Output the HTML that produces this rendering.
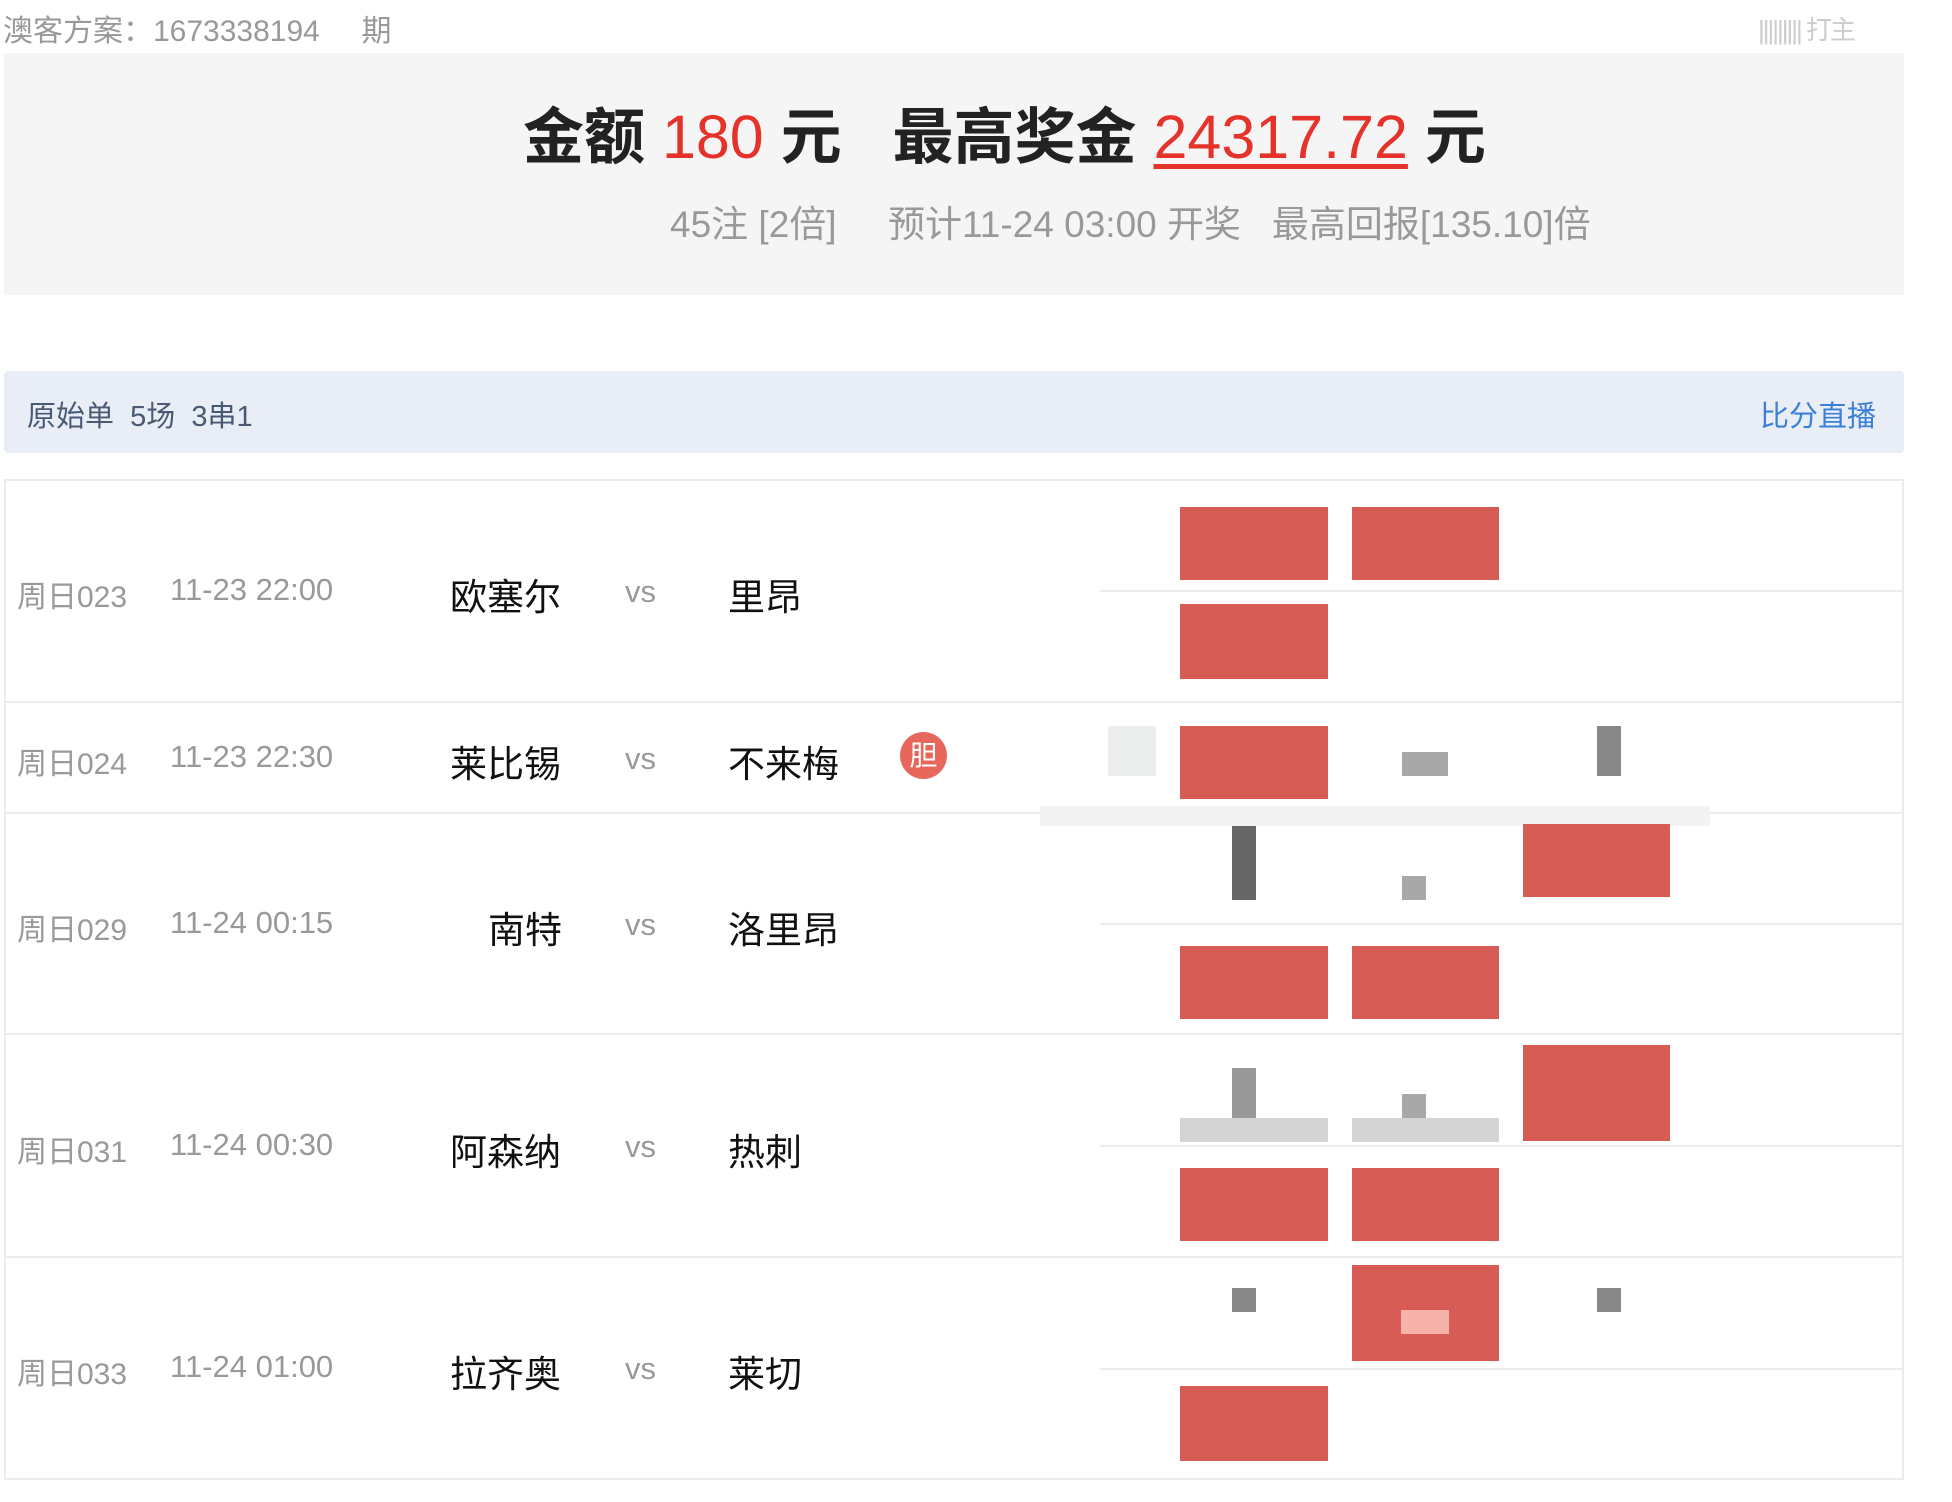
<!DOCTYPE html>
<html><head><meta charset="utf-8"><style>
*{margin:0;padding:0;box-sizing:border-box}
body{width:1952px;height:1502px;background:#fff;position:relative;overflow:hidden;font-family:"Liberation Sans","Noto Sans CJK SC",sans-serif}
.a{position:absolute;white-space:nowrap}
.r{position:absolute;background:#d65c55}
.g{position:absolute;background:#a8a8a8}
.l{position:absolute;height:2px;background:#ececec}
.t1{color:#999;font-size:30px}
.t2{color:#999;font-size:31px}
.tm{color:#111;font-size:37px}
.vs{color:#999;font-size:31px}
</style></head><body>
<div class="a" style="left:3px;top:6px;font-size:30px;color:#999">澳客方案：1673338194&nbsp;&nbsp;&nbsp;&nbsp;&nbsp;期</div>
<div class="a" style="left:1758px;top:10px;font-size:26px;color:#ccc;letter-spacing:-2px">||||||||| 打主</div>
<div class="a" style="left:4px;top:53px;width:1900px;height:242px;background:#f5f5f5"></div>
<div class="a" style="left:523px;top:100px;font-size:61px;font-weight:bold;color:#222;line-height:74px">金额 <span style="color:#e5322a;font-weight:normal">180</span> 元&nbsp;&nbsp;&nbsp;最高奖金 <span style="color:#e5322a;font-weight:normal;text-decoration:underline;text-decoration-thickness:5px;text-underline-offset:6px">24317.72</span> 元</div>
<div class="a" style="left:670px;top:194px;font-size:37px;color:#999">45注 [2倍]&nbsp;&nbsp;&nbsp;&nbsp;&nbsp;预计11-24 03:00 开奖&nbsp;&nbsp;&nbsp;最高回报[135.10]倍</div>
<div class="a" style="left:4px;top:371px;width:1900px;height:82px;background:#e9eef6;border-radius:4px"></div>
<div class="a" style="left:27px;top:393px;font-size:29px;color:#4a5a75">原始单&nbsp;&nbsp;5场&nbsp;&nbsp;3串1</div>
<div class="a" style="left:1760px;top:393px;font-size:29px;color:#3b7fd6">比分直播</div>
<div class="a" style="left:4px;top:479px;width:1900px;height:1001px;border:2px solid #ececec"></div>
<div class="l" style="left:4px;width:1900px;top:701px"></div>
<div class="l" style="left:4px;width:1900px;top:812px"></div>
<div class="l" style="left:4px;width:1900px;top:1033px"></div>
<div class="l" style="left:4px;width:1900px;top:1256px"></div>
<div class="l" style="left:1100px;width:804px;top:590px"></div>
<div class="l" style="left:1100px;width:804px;top:923px"></div>
<div class="l" style="left:1100px;width:804px;top:1145px"></div>
<div class="l" style="left:1100px;width:804px;top:1368px"></div>

<div class="a t1" style="left:17px;top:572px">周日023</div><div class="a t2" style="left:170px;top:572px">11-23 22:00</div>
<div class="a tm" style="left:450px;top:567px">欧塞尔</div><div class="a vs" style="left:625px;top:574px">vs</div><div class="a tm" style="left:728px;top:567px">里昂</div>
<div class="a t1" style="left:17px;top:739px">周日024</div><div class="a t2" style="left:170px;top:739px">11-23 22:30</div>
<div class="a tm" style="left:450px;top:734px">莱比锡</div><div class="a vs" style="left:625px;top:741px">vs</div><div class="a tm" style="left:728px;top:734px">不来梅</div>
<div class="a" style="left:900px;top:732px;width:47px;height:47px;border-radius:50%;background:#e8675c;color:#fff;font-size:28px;text-align:center;line-height:47px">胆</div>
<div class="a t1" style="left:17px;top:905px">周日029</div><div class="a t2" style="left:170px;top:905px">11-24 00:15</div>
<div class="a tm" style="left:488px;top:900px">南特</div><div class="a vs" style="left:625px;top:907px">vs</div><div class="a tm" style="left:728px;top:900px">洛里昂</div>
<div class="a t1" style="left:17px;top:1127px">周日031</div><div class="a t2" style="left:170px;top:1127px">11-24 00:30</div>
<div class="a tm" style="left:450px;top:1122px">阿森纳</div><div class="a vs" style="left:625px;top:1129px">vs</div><div class="a tm" style="left:728px;top:1122px">热刺</div>
<div class="a t1" style="left:17px;top:1349px">周日033</div><div class="a t2" style="left:170px;top:1349px">11-24 01:00</div>
<div class="a tm" style="left:450px;top:1344px">拉齐奥</div><div class="a vs" style="left:625px;top:1351px">vs</div><div class="a tm" style="left:728px;top:1344px">莱切</div>

<div class="r" style="left:1180px;top:507px;width:148px;height:73px"></div>
<div class="r" style="left:1352px;top:507px;width:147px;height:73px"></div>
<div class="r" style="left:1180px;top:604px;width:148px;height:75px"></div>
<div class="a" style="left:1108px;top:726px;width:48px;height:50px;background:#eceeee"></div>
<div class="r" style="left:1180px;top:726px;width:148px;height:73px"></div>
<div class="g" style="left:1402px;top:752px;width:46px;height:24px"></div>
<div class="g" style="left:1597px;top:726px;width:24px;height:50px;background:#888"></div>
<div class="a" style="left:1040px;top:806px;width:670px;height:20px;background:#f3f3f3"></div>
<div class="g" style="left:1232px;top:826px;width:24px;height:74px;background:#666"></div>
<div class="g" style="left:1402px;top:876px;width:24px;height:24px"></div>
<div class="r" style="left:1523px;top:824px;width:147px;height:73px"></div>
<div class="r" style="left:1180px;top:946px;width:148px;height:73px"></div>
<div class="r" style="left:1352px;top:946px;width:147px;height:73px"></div>
<div class="g" style="left:1232px;top:1068px;width:24px;height:50px;background:#999"></div>
<div class="a" style="left:1180px;top:1118px;width:148px;height:24px;background:#d4d4d4"></div>
<div class="g" style="left:1402px;top:1094px;width:24px;height:24px"></div>
<div class="a" style="left:1352px;top:1118px;width:147px;height:24px;background:#d4d4d4"></div>
<div class="r" style="left:1523px;top:1045px;width:147px;height:96px"></div>
<div class="r" style="left:1180px;top:1168px;width:148px;height:73px"></div>
<div class="r" style="left:1352px;top:1168px;width:147px;height:73px"></div>
<div class="g" style="left:1232px;top:1288px;width:24px;height:24px;background:#888"></div>
<div class="r" style="left:1352px;top:1265px;width:147px;height:96px"></div>
<div class="a" style="left:1401px;top:1310px;width:48px;height:24px;background:#f7b3aa"></div>
<div class="g" style="left:1597px;top:1288px;width:24px;height:24px;background:#888"></div>
<div class="r" style="left:1180px;top:1386px;width:148px;height:75px"></div>
</body></html>
